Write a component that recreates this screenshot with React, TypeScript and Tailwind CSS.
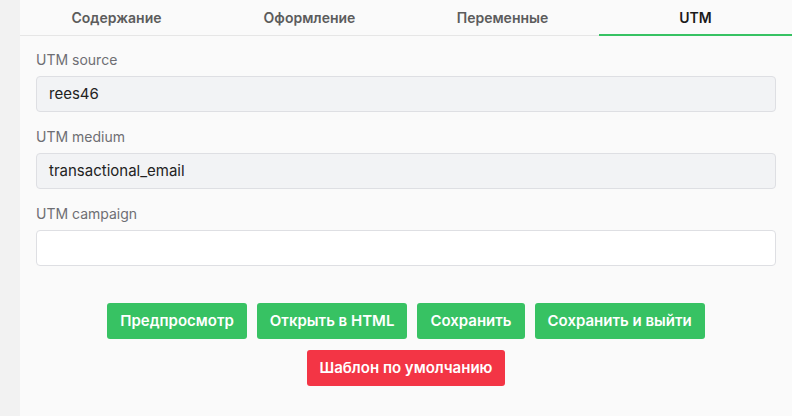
import React from "react";

const tabs = ["Содержание", "Оформление", "Переменные", "UTM"];

function Field({ label, value, white }: { label: string; value: string; white?: boolean }) {
  return (
    <div className="flex flex-col">
      <div className="h-5 text-[14px] leading-5 text-[#6e6e73]">{label}</div>
      <div
        className={
          "mt-[6px] h-9 rounded-[4px] border border-[#dedfe3] pl-3 flex items-center text-[15px] text-[#222] " +
          (white ? "bg-white" : "bg-[#f2f3f5]")
        }
      >
        {value}
      </div>
    </div>
  );
}

export default function App() {
  return (
    <div
      className="w-[792px] h-[416px] flex bg-[#f2f2f2] overflow-hidden"
      style={{ fontFamily: "Inter, 'Noto Sans', sans-serif" }}
    >
      <div className="w-5 shrink-0 bg-[#f2f2f2]" />
      <div className="flex-1 bg-[#fafafa] flex flex-col">
        <div className="flex h-9 border-b border-[#e6e6e6]">
          {tabs.map((t, i) => (
            <div
              key={t}
              className={
                "flex-1 flex items-center justify-center text-[14px] font-semibold relative " +
                (i === 3 ? "text-[#1a1a1a]" : "text-[#5c5c5c]")
              }
            >
              {t}
              {i === 3 && <div className="absolute left-0 right-0 bottom-[-1px] h-[2px] bg-[#37c263]" />}
            </div>
          ))}
        </div>
        <div className="px-4 pt-[14px] flex flex-col gap-[15px]">
          <Field label="UTM source" value="rees46" />
          <Field label="UTM medium" value="transactional_email" />
          <Field label="UTM campaign" value="" white />
        </div>
        <div className="mt-[37px] flex flex-col items-center gap-[11px]">
          <div className="flex gap-[10px]">
            {["Предпросмотр", "Открыть в HTML", "Сохранить", "Сохранить и выйти"].map((b) => (
              <button
                key={b}
                className="h-9 px-[13px] rounded-[3px] bg-[#37c263] text-white text-[15px] font-semibold"
              >
                {b}
              </button>
            ))}
          </div>
          <button className="h-9 px-[13px] rounded-[3px] bg-[#f33545] text-white text-[15px] font-semibold">
            Шаблон по умолчанию
          </button>
        </div>
      </div>
    </div>
  );
}
